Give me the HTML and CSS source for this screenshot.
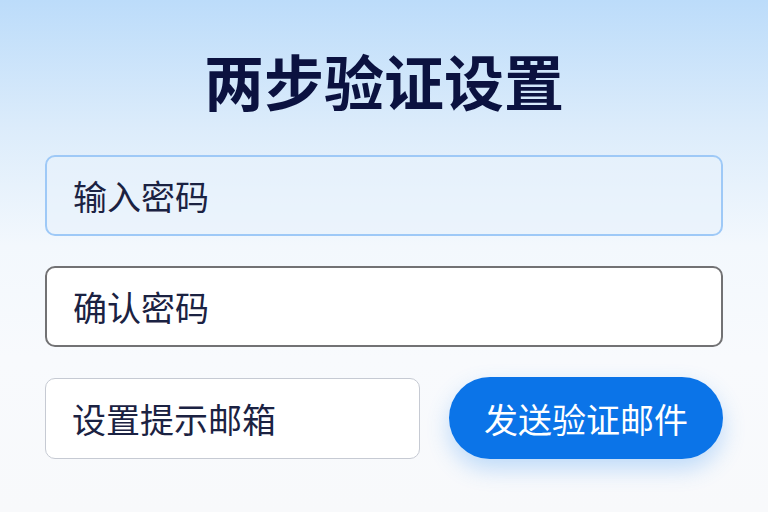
FILE: index.html
```html
<!DOCTYPE html>
<html lang="zh">
<head>
<meta charset="utf-8">
<link rel="stylesheet" href="styles.css">
</head>
<body>
<main class="page">
  <h1 class="title">两步验证设置</h1>
  <div class="field field-focus">输入密码</div>
  <div class="field field-dark">确认密码</div>
  <div class="row">
    <div class="field field-light field-short">设置提示邮箱</div>
    <button class="btn">发送验证邮件</button>
  </div>
</main>
</body>
</html>
```

FILE: styles.css
```css
html, body {
  margin: 0;
  padding: 0;
}
body {
  width: 768px;
  height: 512px;
  overflow: hidden;
  background: linear-gradient(180deg, #bcdcfa 0%, #dcecfb 25%, #f3f8fd 48%, #f8fafd 70%, #f8f9fb 100%);
  font-family: "Noto Sans CJK SC", "Noto Sans", sans-serif;
}
.page {
  box-sizing: border-box;
  padding: 45px 45px 0 45px;
  display: flex;
  flex-direction: column;
}
.title {
  margin: 0 0 40px 0;
  text-align: center;
  font-size: 60px;
  line-height: 70px;
  font-weight: 700;
  color: #0b1240;
  letter-spacing: 0;
}
.field {
  box-sizing: border-box;
  height: 81px;
  border-radius: 10px;
  padding: 0 26px;
  display: flex;
  align-items: center;
  font-size: 34px;
  color: #1b2242;
  margin-bottom: 30px;
}
.field-focus {
  border: 2px solid #9ec9f7;
  background: rgba(232, 242, 252, 0.6);
}
.field-dark {
  border: 2px solid #727274;
  background: #ffffff;
}
.field-light {
  border: 1.5px solid #c6cad3;
  background: #ffffff;
}
.row {
  display: flex;
  align-items: center;
  gap: 29px;
}
.field-short {
  width: 375px;
  margin-bottom: 0;
}
.btn {
  flex: 1;
  height: 82px;
  border: none;
  border-radius: 41px;
  background: #0b74e8;
  color: #ffffff;
  font-family: "Noto Sans CJK SC", "Noto Sans", sans-serif;
  font-size: 34px;
  box-shadow: 0 10px 22px rgba(60, 150, 245, 0.3);
  padding: 0;
}
```
